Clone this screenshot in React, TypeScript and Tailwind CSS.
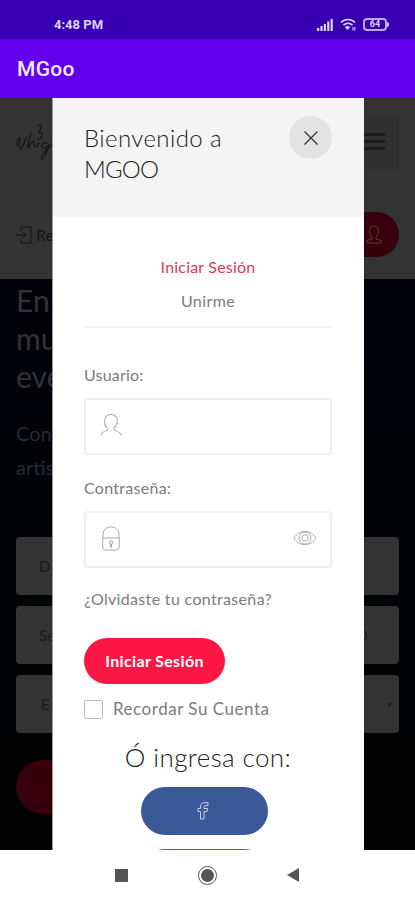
import { useState } from "react";

const UserIcon = ({ className }: { className?: string }) => (
  <svg viewBox="0 0 24 26" fill="none" stroke="currentColor" strokeWidth="1.100" className={className}>
    <path d="M8.500 18.500l-.8-2.500C5.500 14.500 5 12 5.300 10.500 4.300 9 4.600 8 5.300 7.500 5 4 8 1.600 12 1.600c3 0 4.500.8 5 2.200 2 .8 2.200 3.200 1.500 4.700.8 1.500.3 2.800-.5 3.300-.3 2-1.300 3.500-2.700 4.500l.4 2.200" />
    <path d="M8.500 18.500C5.500 20.300 1.500 20 1 24.500M15.700 18.500c3 1.800 6.800 1.500 7.300 6" />
  </svg>
);

const ProfileIcon = () => (
  <svg viewBox="0 0 16 19" fill="none" stroke="currentColor" className="h-[19px] w-4">
    <path d="M6 14v-2C4.300 10.800 3.500 8.500 3.500 6 3.500 2.500 5.300 1 8 1s4.500 1.500 4.500 5c0 2.500-.8 4.800-2.500 6v2l5 1.500V18H1v-2.500z" />
  </svg>
);

const LockIcon = () => (
  <svg viewBox="0 0 18 25" fill="none" stroke="currentColor" className="h-[25px] w-[18px]">
    <path d="M1 12V8a8 7.200 0 0 1 16 0v4M.7 12h16.600v9a3 3 0 0 1-3 3h-10.600a3 3 0 0 1-3-3z" />
    <circle cx="9" cy="16.500" r="1.700" />
    <path d="M9 18v3.500" strokeWidth="2" />
  </svg>
);

const EyeIcon = () => (
  <svg viewBox="0 0 24 16" fill="none" stroke="currentColor" className="h-4 w-6">
    <path d="M1 8C6-.8 18-.8 23 8 18 16.800 6 16.800 1 8z" />
    <circle cx="12" cy="8" r="6" />
    <circle cx="12" cy="8" r="3.200" />
  </svg>
);

const StatusBar = () => (
  <div className="flex h-[39px] items-end justify-between bg-[#3700b3] pb-[6px] pl-[54px] pr-[26px] font-[Roboto,sans-serif] text-[#ded3f7]">
    <div className="text-[13px] font-bold leading-4">4:48 PM</div>
    <div className="flex items-center gap-[7px] pb-[2px]">
      <svg viewBox="0 0 16 12" fill="currentColor" className="h-3 w-4">
        <rect x="0" y="9" width="2.200" height="3" />
        <rect x="3.400" y="7" width="2.200" height="5" />
        <rect x="6.800" y="5" width="2.200" height="7" />
        <rect x="10.200" y="2.500" width="2.200" height="9.500" />
        <rect x="13.600" y="0" width="2.200" height="12" />
      </svg>
      <svg viewBox="0 0 16 13" fill="none" stroke="currentColor" strokeWidth="1.600" className="h-[13px] w-4">
        <path d="M1 4.500C5 .5 11 .5 15 4.500M3.500 7.200c2.700-2.600 6.300-2.600 9 0" />
        <path d="M5 9.300c1.500-1.600 3.500-1.600 5 0L7.500 12z" fill="currentColor" stroke="none" />
        <path d="M13 9v3.500M14.800 9v3.500" strokeWidth="1" />
      </svg>
      <div className="flex items-center">
        <div className="flex h-[13px] w-6 items-center justify-center rounded-[4px] border-2 border-current/80 text-[9px] font-bold leading-none">64</div>
        <div className="h-[5px] w-[2px] rounded-r bg-current"></div>
      </div>
    </div>
  </div>
);

const Page = () => (
  <div className="h-full bg-linear-to-b from-[#020208] via-[#010307] to-[#020202] font-[Lato,sans-serif]">
    <div className="h-[181px] bg-[#333333] px-4 text-[#151515]">
      <div className="flex h-[87px] items-center justify-between">
        <svg viewBox="0 0 62 44" fill="none" stroke="currentColor" strokeWidth="1.200" strokeLinecap="round" className="h-11 w-[62px]">
          <path d="M1 26c0-5 2-9 3-8s-2 10 0 11c3 0 5-11 7-12" />
          <path d="M15 12c-1 6-4 16-3 16s3-7 5-7 0 6 2 6 3-2 4-4" />
          <path d="M22 6c1-2 4-1 3 2s-3 4-2 4 4 1 3 4-3 4-4 3M31 23c-3-2-6 1-5 4s6 0 7-3c0 4-2 8-4 12s-5 4-3 0 6-8 10-11" />
          <path d="M36 24c0-6 5-7 6-3s-5 7-6 3zM44 23c1-6 6-7 7-3s-5 7-7 3z" />
        </svg>
        <div className="flex h-[54px] w-[44px] items-center bg-[#303030] pl-2">
          <div className="flex w-[22px] flex-col gap-[4px]">
            <div className="h-[3px] bg-[#1b1b1b]"></div>
            <div className="h-[3px] bg-[#1b1b1b]"></div>
            <div className="h-[3px] bg-[#1b1b1b]"></div>
          </div>
        </div>
      </div>
      <div className="flex items-center justify-between pt-[27px]">
        <div className="flex items-center gap-1 text-base">
          <svg viewBox="0 0 16 18" fill="none" stroke="currentColor" className="h-[18px] w-4">
            <path d="M0 9h10M7 6l3 3-3 3M5 5V1h10v16H5v-4" />
          </svg>
          Re
        </div>
        <div className="flex h-[45px] w-[70px] items-center justify-end rounded-full bg-[#38000c] pr-[17px] text-[#63353d]">
          <ProfileIcon />
        </div>
      </div>
    </div>
    <div className="px-4 pt-[2px] text-[#303238]">
      <div className="text-[30px] leading-[38px]">
        <div>En</div>
        <div>mu</div>
        <div>eve</div>
      </div>
      <div className="pt-[21px] text-[20px] leading-[34px] text-[#262930]">
        <div>Con</div>
        <div>artis</div>
      </div>
      <div className="flex flex-col gap-[11px] pt-[53px] text-[15px] text-[#1b1b1b]">
        <div className="flex h-[58px] items-center rounded bg-[#333333] pl-[23px]">D</div>
        <div className="flex h-[58px] items-center justify-between rounded bg-[#333333] pl-[23px] pr-[32px]">
          Se
          <div className="h-3 w-3 rounded-full border border-current"></div>
        </div>
        <div className="flex h-[58px] items-center justify-between rounded bg-[#333333] pl-[25px] pr-[6px]">
          E
          <span className="text-[7px]">▼</span>
        </div>
      </div>
      <div className="mt-[27px] h-[54px] w-[140px] rounded-full bg-[#38000c]"></div>
    </div>
  </div>
);

const LoginModal = () => {
  const [showPassword, setShowPassword] = useState(false);

  return (
    <div className="absolute inset-y-0 left-[52px] w-[312px] overflow-hidden border-l border-[#999] bg-white font-[Lato,sans-serif] text-[#7c7c7c]">
      <div className="flex h-[119px] items-start justify-between bg-[#f4f4f4] pl-[31px] pr-8 pt-[18px]">
        <h2 className="pt-[6px] text-[24px] font-light leading-[31px] tracking-[0.400px] text-[#222]">
          Bienvenido a<br />
          <span className="tracking-[-0.800px]">MGOO</span>
        </h2>
        <button className="flex h-[43px] w-[43px] items-center justify-center rounded-full bg-[#e3e3e3] text-[#333]">
          <svg viewBox="0 0 14 14" stroke="currentColor" strokeWidth="1.300" className="h-[14px] w-[14px]">
            <path d="M.5.5l13 13M13.500.5l-13 13" />
          </svg>
        </button>
      </div>

      <div className="pl-[31px] pr-8">
        <div className="flex h-[111px] flex-col items-center border-b-2 border-[#f5f5f5] pt-[33px] text-base leading-[34px]">
          <div className="tracking-[0.200px] text-[#d9385e]">Iniciar Sesión</div>
          <div className="tracking-[0.400px]">Unirme</div>
        </div>

        <div className="pt-[36px] text-base leading-[22px] tracking-[0.200px]">Usuario:</div>
        <div className="mt-[12px] flex h-[57px] items-center rounded-[3px] border-2 border-[#f0f0f0] pb-[3px] pl-[14px] text-[#aaa]">
          <UserIcon className="h-[24px] w-[22px]" />
          <input className="w-40 outline-none" />
        </div>

        <div className="pt-[22px] text-base leading-[22px] tracking-[0.300px]">Contraseña:</div>
        <div className="mt-[12px] flex h-[57px] items-center justify-between rounded-[3px] border-2 border-[#f0f0f0] pb-[3px] pl-4 pr-[13px] text-[#aaa]">
          <LockIcon />
          <input type={showPassword ? "text" : "password"} className="w-40 outline-none" />
          <button onClick={() => setShowPassword(!showPassword)}>
            <EyeIcon />
          </button>
        </div>

        <div className="pt-[20px] text-base leading-[22px] tracking-[0.330px]">¿Olvidaste tu contraseña?</div>
        <button className="mt-[28px] flex h-[46px] w-[141px] items-center justify-center rounded-full bg-[#fc1744] pb-px text-base font-bold tracking-[0.350px] text-white">
          Iniciar Sesión
        </button>

        <div className="mt-[14px] flex h-[22px] items-center gap-[10px] text-[17px] tracking-[0.520px]">
          <div className="h-[19px] w-[19px] rounded-[2px] border border-[#bbb]"></div>
          <span className="pb-px">Recordar Su Cuenta</span>
        </div>

        <div className="mt-[21px] text-center text-[26px] font-light leading-[32px] tracking-[0.400px] text-[#222]">Ó ingresa con:</div>
        <div className="flex flex-col items-center gap-[14px] pr-[7px] pt-[14px]">
          <button className="flex h-[48px] w-[127px] items-center justify-center rounded-full bg-[#3b5998] pr-[4px] text-[#c8d3e8]">
            <svg viewBox="0 0 12 18" fill="none" stroke="currentColor" className="h-[18px] w-3">
              <path d="M3.500 17V9.500H1v-3h2.500V5c0-3 1.500-4.300 4.300-4.300H11v3H8.700C7.500 3.700 7 4.200 7 5.300v1.200h3.500l-.5 3H7V17z" />
            </svg>
          </button>
          <button className="h-[48px] w-[127px] rounded-full bg-[#c32f4b]"></button>
        </div>
      </div>
    </div>
  );
};

const App = () => {
  return (
    <div className="flex h-[900px] w-[415px] flex-col overflow-hidden bg-white">
      <StatusBar />
      <div className="flex h-[59px] items-center bg-[#6200ee] px-[17px] font-[Roboto,sans-serif] text-[21px] font-medium tracking-[0.300px] text-[#f1e8fd]">
        <span className="pt-[3px]">MGoo</span>
      </div>
      <div className="relative h-[752px] overflow-hidden">
        <Page />
        <LoginModal />
      </div>
      <div className="flex h-[50px] items-center justify-between pl-[115px] pr-[116px] text-[#555]">
        <div className="h-[13px] w-[13px] bg-current"></div>
        <div className="flex h-[19px] w-[19px] items-center justify-center rounded-full border border-current">
          <div className="h-[13px] w-[13px] rounded-full bg-current"></div>
        </div>
        <svg viewBox="0 0 12 14" fill="currentColor" className="h-[14px] w-3">
          <path d="M12 0v14L0 7z" />
        </svg>
      </div>
    </div>
  );
};

export default App;
